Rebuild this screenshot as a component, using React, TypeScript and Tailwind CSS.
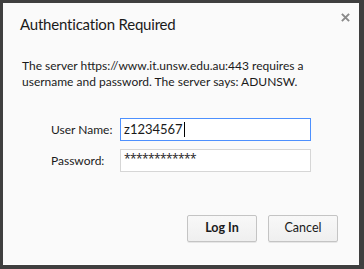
export default function App() {
  return (
    <div className="h-[269px] w-[364px] bg-[#3f3f3f] pb-[4px] pl-[3px] pr-[5px] pt-[3px] font-['Lato',sans-serif] text-[#1a1a1a]">
      <div className="relative flex h-full flex-col border-b border-white bg-[#fafafa]">
        <button className="absolute right-[8px] top-[8px] flex h-[12px] w-[12px] items-center justify-center text-[#8a8a8a]">
          <svg viewBox="0 0 10 10" className="h-[9px] w-[9px]">
            <path d="M1 1 L9 9 M9 1 L1 9" stroke="currentColor" strokeWidth="2.2" />
          </svg>
        </button>

        <h1 className="pl-[17px] pt-[10px] text-[15px] leading-[22px] tracking-[-0.2px]">Authentication Required</h1>

        <p className="mt-[23px] pl-[19px] pr-[40px] text-[12px] leading-[16px]">
          The server https://www.it.unsw.edu.au:443 requires a username and password. The server
          says: ADUNSW.
        </p>

        <div className="mt-[28px] flex flex-col gap-[8px] pl-[48px]">
          <div className="flex items-center">
            <span className="w-[69px] text-[12px]">User Name:</span>
            <div className="flex h-[23px] w-[191px] items-center border border-[#4d90fe] bg-white px-[3px] text-[13px]">
              z1234567
              <span className="ml-[1px] h-[15px] w-px bg-black" />
            </div>
          </div>
          <div className="flex items-center">
            <span className="w-[69px] text-[12px]">Password:</span>
            <div className="flex h-[23px] w-[191px] items-start border border-[#d6d6d6] bg-white px-[3px] pt-[2px] font-['Open_Sans',sans-serif] text-[12px] leading-[14px] tracking-[-0.6px]">
              ************
            </div>
          </div>
        </div>

        <div className="mt-auto flex justify-end gap-[11px] pb-[22px] pr-[21px]">
          <button className="h-[27px] w-[70px] rounded-[2px] border border-[#c4c4c4] bg-gradient-to-b from-[#f8f8f8] to-[#efefef] text-[12.5px] font-bold shadow-[0_1px_0_rgba(0,0,0,0.08)]">
            Log In
          </button>
          <button className="h-[27px] w-[70px] rounded-[2px] border border-[#c4c4c4] bg-gradient-to-b from-[#f8f8f8] to-[#efefef] text-[12.5px] shadow-[0_1px_0_rgba(0,0,0,0.08)]">
            Cancel
          </button>
        </div>
      </div>
    </div>
  );
}
